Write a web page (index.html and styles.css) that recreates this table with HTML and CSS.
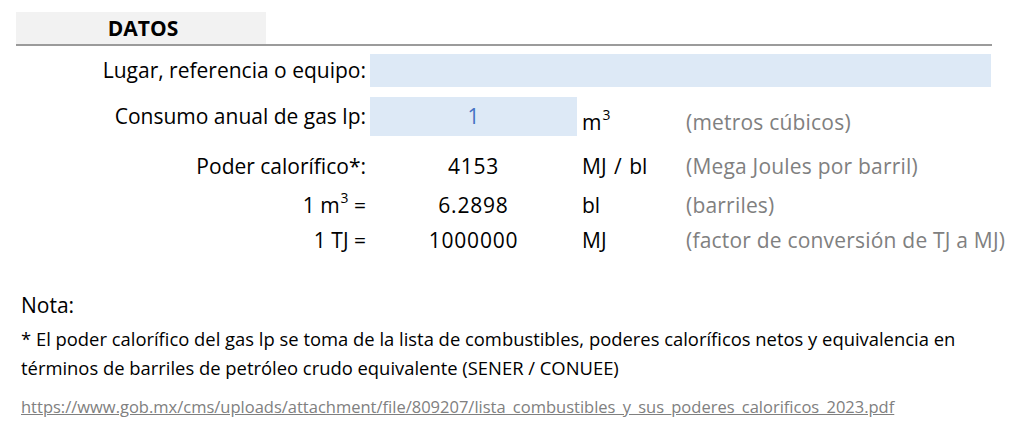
FILE: index.html
```html
<!DOCTYPE html>
<html lang="es">
<head>
<meta charset="utf-8">
<title>Datos</title>
<link rel="stylesheet" href="styles.css">
</head>
<body>
<div class="sheet">
  <div class="head"><div class="head-cell">DATOS</div></div>

  <div class="row row-in1">
    <div class="label">Lugar, referencia o equipo:</div>
    <div class="input input-wide"></div>
  </div>

  <div class="row row-in2">
    <div class="label">Consumo anual de gas lp:</div>
    <div class="input value-blue">1</div>
    <div class="unit low">m<sup>3</sup></div>
    <div class="desc low">(metros cúbicos)</div>
  </div>

  <div class="row row-d1">
    <div class="label">Poder calorífico*:</div>
    <div class="value">4153</div>
    <div class="unit">MJ / bl</div>
    <div class="desc">(Mega Joules por barril)</div>
  </div>

  <div class="row row-d2">
    <div class="label">1 m<sup>3</sup> =</div>
    <div class="value">6.2898</div>
    <div class="unit">bl</div>
    <div class="desc">(barriles)</div>
  </div>

  <div class="row row-d3">
    <div class="label">1 TJ =</div>
    <div class="value">1000000</div>
    <div class="unit">MJ</div>
    <div class="desc">(factor de conversión de TJ a MJ)</div>
  </div>

  <div class="note">
    <div class="note-title">Nota:</div>
    <p class="note-text">* El poder calorífico del gas lp se toma de la lista de combustibles, poderes caloríficos netos y equivalencia en<br>términos de barriles de petróleo crudo equivalente (SENER / CONUEE)</p>
    <a class="note-link" href="#">https://www.gob.mx/cms/uploads/attachment/file/809207/lista_combustibles_y_sus_poderes_calorificos_2023.pdf</a>
  </div>
</div>
</body>
</html>
```

FILE: styles.css
```css
html, body {
  margin: 0;
  padding: 0;
  background: #ffffff;
}

body {
  font-family: "Open Sans", Lato, "Liberation Sans", sans-serif;
  font-size: 21px;
  color: #000000;
}

.sheet {
  margin-left: 16px;
  width: 976px;
}

.head {
  padding-top: 12px;
  border-bottom: 2px solid #9b9b9b;
}

.head-cell {
  width: 250px;
  height: 32px;
  line-height: 32px;
  background: #f2f2f2;
  text-align: center;
  font-weight: 700;
  padding-left: 4px;
  box-sizing: border-box;
}

.row {
  display: grid;
  grid-template-columns: 354px 207px 109px 1fr;
  white-space: nowrap;
}

.label {
  text-align: right;
  padding-right: 4px;
}

.input {
  background: #dde9f6;
}

.input-wide {
  grid-column: 2 / 5;
  margin-right: 1px;
}

.value,
.value-blue {
  text-align: center;
}

.value {
  letter-spacing: 0.8px;
}

.value-blue {
  color: #4472c4;
}

.unit {
  padding-left: 5px;
  word-spacing: 2px;
}

.desc {
  color: #808080;
  letter-spacing: 0.2px;
}

sup {
  font-size: 0.66em;
  line-height: 0;
  vertical-align: 0.72em;
  margin-left: 1px;
}

.row-in1 {
  margin-top: 8px;
  height: 33px;
  line-height: 33px;
}

.row-in2 {
  margin-top: 10px;
  height: 39px;
  line-height: 39px;
}

.row-in2 .low {
  line-height: 24px;
  align-self: end;
  margin-bottom: 2px;
}

.row-d1,
.row-d2,
.row-d3 {
  line-height: 24px;
}

.row-d1 { margin-top: 18px; }
.row-d2 { margin-top: 15px; }
.row-d3 { margin-top: 11px; }

.note {
  padding-left: 5px;
  margin-top: 41px;
}

.note-title {
  line-height: 24px;
}

.note-text {
  margin: 7px 0 0 0;
  font-size: 18.4px;
  line-height: 29px;
}

.note-link {
  display: block;
  margin-top: 13px;
  font-size: 16.5px;
  line-height: 24px;
  color: #808080;
  text-decoration: underline;
  white-space: nowrap;
}
```
